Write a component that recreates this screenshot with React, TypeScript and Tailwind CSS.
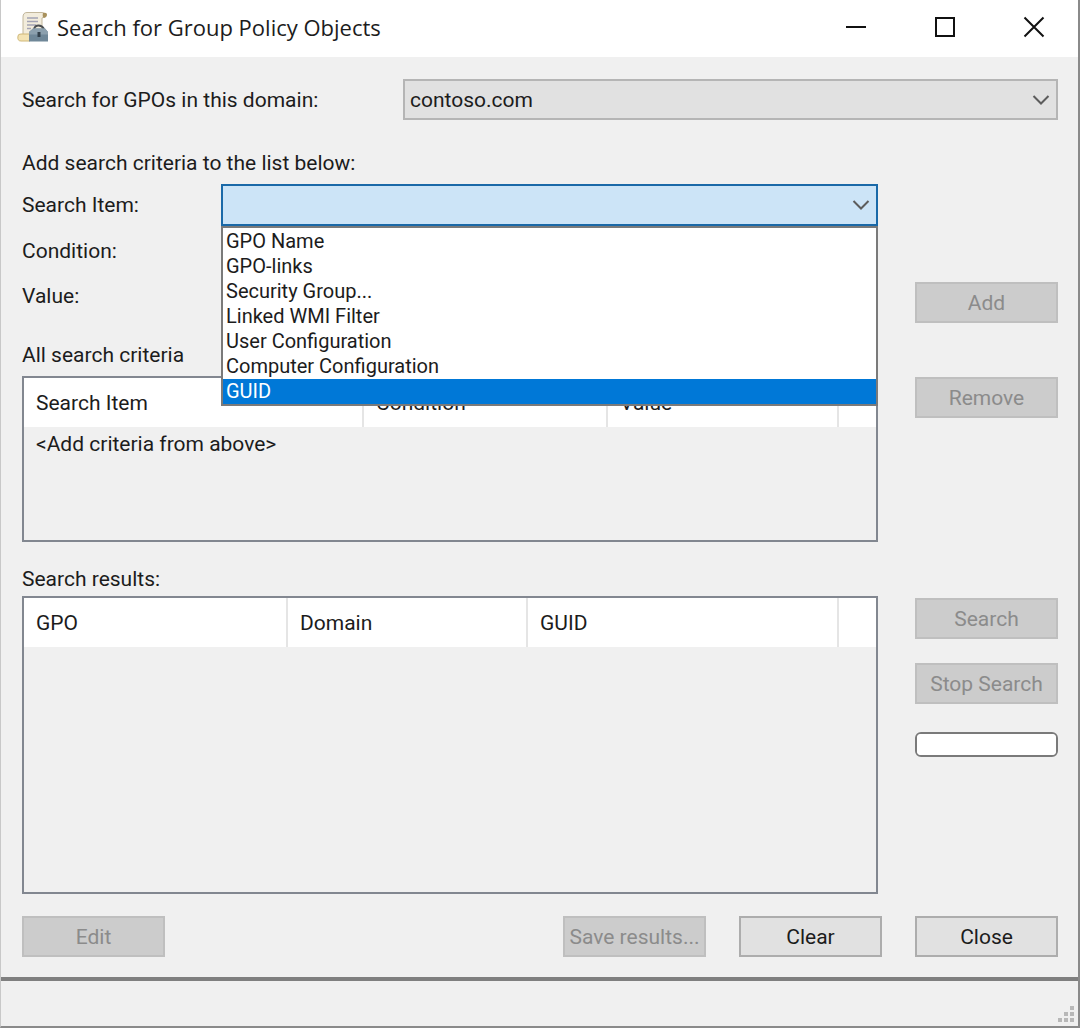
import { useState } from "react";
import type { ComponentProps, ReactNode } from "react";
import { clsx } from "clsx";

const SEARCH_ITEMS = [
  "GPO Name",
  "GPO-links",
  "Security Group...",
  "Linked WMI Filter",
  "User Configuration",
  "Computer Configuration",
  "GUID",
];

const CRITERIA_COLUMNS = [
  { label: "Search Item", width: "w-[339px]" },
  { label: "Condition", width: "w-[244px]" },
  { label: "Value", width: "w-[231px]" },
];

const RESULT_COLUMNS = [
  { label: "GPO", width: "w-[263px]" },
  { label: "Domain", width: "w-[240px]" },
  { label: "GUID", width: "w-[311px]" },
];

function GpoIcon() {
  return (
    <svg viewBox="0 0 32 32" className="size-8 shrink-0" aria-hidden="true">
      <path d="M6 6q0-4.500 4-4.500h15q3 0 3 2.500t-3 3V26H6z" fill="#f2ecdc" stroke="#c2b79c" />
      <path d="M26 2q4-1 4 1.500T27 7q-2-1-1-5z" fill="#a8915c" />
      <path d="M1 25q0-2 3-2h9v7H4q-4 0-3-5z" fill="#f3e3b4" stroke="#d0b878" />
      <path d="M10 7h11M10 10.500h11M10 14h9M10 17.500h4" stroke="#a3a2b4" strokeWidth="1.500" />
      <path d="M17 18q1-3.500 4.500-3.500T27 18" fill="none" stroke="#4a4d50" strokeWidth="2" />
      <path d="M12 21l4-3.500h12l3 3.500v9.500H12z" fill="#6f8798" />
      <path d="M12 21l4-3.500h12l3 3.500v2.500H12z" fill="#8ca0ae" />
      <path d="M20.500 21h3v5h-3z" fill="#33414c" />
    </svg>
  );
}

function Chevron() {
  return (
    <svg
      viewBox="0 0 18 12"
      className="pointer-events-none absolute top-1/2 right-2 h-3 w-[18px] -translate-y-1/2"
      fill="none"
      stroke="#5c5c5c"
      strokeWidth="2"
      aria-hidden="true"
    >
      <path d="M1.500 2l7.500 7.500L16.500 2" />
    </svg>
  );
}

function CaptionButton({ label, children }: { label: string; children: ReactNode }) {
  return (
    <button type="button" aria-label={label} className="flex h-full w-[89px] items-center justify-center hover:bg-gray-200">
      <svg viewBox="0 0 22 22" className="size-[22px]" fill="none" stroke="#111111" strokeWidth="2" aria-hidden="true">
        {children}
      </svg>
    </button>
  );
}

function DialogButton({ className, ...props }: ComponentProps<"button">) {
  return (
    <button
      type="button"
      className={clsx(
        "h-[41px] w-[143px] shrink-0 border-2 border-[#adadad] bg-[#e1e1e1] whitespace-nowrap",
        "disabled:border-[#bfbfbf] disabled:bg-[#cccccc] disabled:text-[#8b8b8b]",
        className,
      )}
      {...props}
    />
  );
}

type Column = { label: string; width: string };

function ListView({ label, columns, height, children }: { label: string; columns: Column[]; height: string; children?: ReactNode }) {
  return (
    <div className={clsx("overflow-hidden border-2 border-[#828790]", height)}>
      <table className="w-full table-fixed text-left" aria-label={label}>
        <thead>
          <tr className="h-[49px] bg-white">
            {columns.map((column) => (
              <th key={column.label} scope="col" className={clsx("border-r-2 border-[#e5e5e5] px-3 font-normal", column.width)}>
                {column.label}
              </th>
            ))}
            <td />
          </tr>
        </thead>
        <tbody>{children}</tbody>
      </table>
    </div>
  );
}

function SearchItemPicker() {
  const [open, setOpen] = useState(true);
  const [value, setValue] = useState("");
  const [highlighted, setHighlighted] = useState("GUID");

  const pick = (item: string) => {
    setValue(item);
    setOpen(false);
  };

  return (
    <div className="relative">
      <select
        id="search-item"
        value={value}
        onChange={(e) => setValue(e.target.value)}
        onMouseDown={(e) => {
          e.preventDefault();
          setOpen(!open);
        }}
        className="block h-[42px] w-full appearance-none border-2 border-[#1a69a8] bg-[#cce4f7] px-1 outline-none"
      >
        <option value="" />
        {SEARCH_ITEMS.map((item) => (
          <option key={item}>{item}</option>
        ))}
      </select>
      <Chevron />
      {open && (
        <ul role="listbox" aria-label="Search items" className="absolute inset-x-0 top-full z-10 border-2 border-[#7a7a7a] bg-white pt-px text-xl">
          {SEARCH_ITEMS.map((item) => (
            <li
              key={item}
              role="option"
              aria-selected={item === highlighted}
              onMouseEnter={() => setHighlighted(item)}
              onClick={() => pick(item)}
              className={clsx("px-[3px] leading-[25px]", item === highlighted && "bg-[#0078d7] text-white")}
            >
              {item}
            </li>
          ))}
        </ul>
      )}
    </div>
  );
}

export default function App() {
  return (
    <div className="border-r-2 border-b-2 border-l border-r-[#8a8a8a] border-b-[#8a8a8a] border-l-[#c8c8c8] bg-[#f0f0f0] font-['Roboto',sans-serif] text-[21px] leading-[26px] text-[#1c1c1c]">
      <header className="flex h-[57px] items-center bg-white pb-1 pl-4">
        <GpoIcon />
        <h1 className="ml-2 grow font-['Open_Sans','Noto_Sans',sans-serif] text-[22px]">Search for Group Policy Objects</h1>
        <CaptionButton label="Minimize">
          <path d="M1 11h20" />
        </CaptionButton>
        <CaptionButton label="Maximize">
          <path d="M2 2h18v18H2z" />
        </CaptionButton>
        <CaptionButton label="Close window">
          <path d="M1.500 1.500l19 19M20.500 1.500l-19 19" />
        </CaptionButton>
      </header>

      <main className="pt-[22px] pr-5 pb-5 pl-[21px]">
        <div className="flex items-center">
          <label htmlFor="domain" className="w-[381px] shrink-0">
            Search for GPOs in this domain:
          </label>
          <div className="relative grow">
            <select id="domain" className="block h-[41px] w-full appearance-none border-2 border-[#b5b5b5] bg-[#e1e1e1] px-[5px]">
              <option>contoso.com</option>
            </select>
            <Chevron />
          </div>
        </div>

        <div className="mt-[30px] flex gap-[37px]">
          <section className="min-w-0 grow">
            <p>Add search criteria to the list below:</p>
            <div className="mt-2 grid grid-cols-[199px_1fr] items-center gap-y-1">
              <label htmlFor="search-item">Search Item:</label>
              <SearchItemPicker />
              <label htmlFor="condition">Condition:</label>
              <select id="condition" disabled className="h-[41px] w-full appearance-none border-2 border-[#bfbfbf] bg-[#cccccc]" />
              <label htmlFor="value">Value:</label>
              <input id="value" type="text" disabled className="h-[41px] w-full border-2 border-[#bfbfbf] bg-[#f0f0f0]" />
            </div>
            <p className="mt-[26px] mb-2">All search criteria</p>
            <ListView label="All search criteria" columns={CRITERIA_COLUMNS} height="h-[166px]">
              <tr>
                <td colSpan={4} className="px-3 py-1">
                  &lt;Add criteria from above&gt;
                </td>
              </tr>
            </ListView>
          </section>
          <div className="flex flex-col gap-[54px] pt-[132px]">
            <DialogButton disabled>Add</DialogButton>
            <DialogButton disabled>Remove</DialogButton>
          </div>
        </div>

        <div className="mt-6 flex gap-[37px]">
          <section className="min-w-0 grow">
            <p className="mb-1">Search results:</p>
            <ListView label="Search results" columns={RESULT_COLUMNS} height="h-[298px]" />
          </section>
          <div className="flex flex-col gap-6 pt-8">
            <DialogButton disabled>Search</DialogButton>
            <DialogButton disabled>Stop Search</DialogButton>
            <progress
              value={0}
              max={100}
              aria-label="Search progress"
              className="mt-1 h-[25px] w-[143px] appearance-none overflow-hidden rounded-md border-2 border-[#7a7a7a] bg-white [&::-webkit-progress-bar]:bg-white [&::-webkit-progress-value]:bg-[#06b025]"
            />
          </div>
        </div>

        <div className="mt-[22px] flex gap-[33px]">
          <DialogButton disabled className="mr-auto">
            Edit
          </DialogButton>
          <DialogButton disabled>Save results...</DialogButton>
          <DialogButton>Clear</DialogButton>
          <DialogButton>Close</DialogButton>
        </div>
      </main>

      <footer className="flex h-[49px] items-end justify-end border-t-4 border-[#7f7f7f] p-1">
        <svg viewBox="0 0 16 16" className="size-4" fill="#b8b8b8" aria-hidden="true">
          <path d="M12 0h4v4h-4zM6 6h4v4H6zM12 6h4v4h-4zM0 12h4v4H0zM6 12h4v4H6zM12 12h4v4h-4z" />
        </svg>
      </footer>
    </div>
  );
}
